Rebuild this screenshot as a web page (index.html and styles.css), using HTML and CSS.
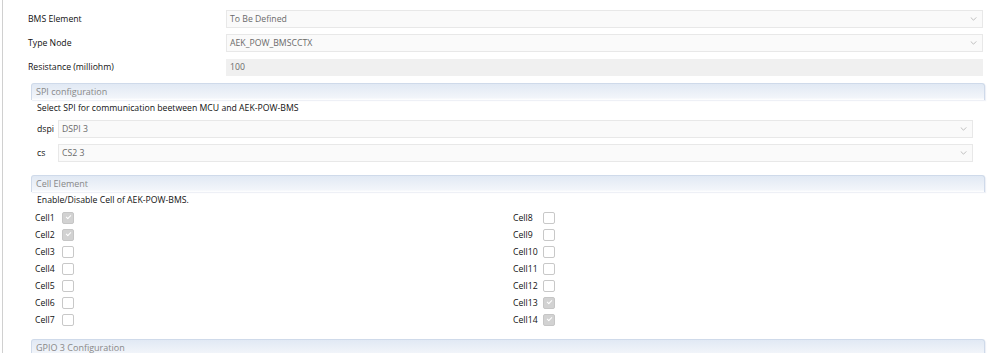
FILE: index.html
```html
<!DOCTYPE html>
<html>
<head>
<meta charset="utf-8">
<link rel="stylesheet" href="styles.css">
</head>
<body>
<div class="page">
  <div class="form">
    <div class="row">
      <span class="label">BMS Element</span>
      <div class="combo"><span>To Be Defined</span><svg class="chev" viewBox="0 0 8 5"><path d="M0.5 0.5 L4 4 L7.5 0.5" /></svg></div>
    </div>
    <div class="row">
      <span class="label">Type Node</span>
      <div class="combo"><span>AEK_POW_BMSCCTX</span><svg class="chev" viewBox="0 0 8 5"><path d="M0.5 0.5 L4 4 L7.5 0.5" /></svg></div>
    </div>
    <div class="row">
      <span class="label">Resistance (milliohm)</span>
      <div class="field"><span>100</span></div>
    </div>
  </div>

  <div class="section spi">
    <div class="sec-head">SPI configuration</div>
    <div class="sec-body">
      <div class="desc">Select SPI for communication beetween MCU and AEK-POW-BMS</div>
      <div class="spi-rows">
        <div class="spi-row">
          <span class="spi-label">dspi</span>
          <div class="combo"><span>DSPI 3</span><svg class="chev" viewBox="0 0 8 5"><path d="M0.5 0.5 L4 4 L7.5 0.5" /></svg></div>
        </div>
        <div class="spi-row">
          <span class="spi-label">cs</span>
          <div class="combo"><span>CS2 3</span><svg class="chev" viewBox="0 0 8 5"><path d="M0.5 0.5 L4 4 L7.5 0.5" /></svg></div>
        </div>
      </div>
    </div>
  </div>

  <div class="section cell-section">
    <div class="sec-head">Cell Element</div>
    <div class="sec-body">
      <div class="desc">Enable/Disable Cell of AEK-POW-BMS.</div>
      <div class="cells">
        <div class="col left">
          <div class="cell"><span>Cell1</span><i class="cb on"></i></div>
          <div class="cell"><span>Cell2</span><i class="cb on"></i></div>
          <div class="cell"><span>Cell3</span><i class="cb"></i></div>
          <div class="cell"><span>Cell4</span><i class="cb"></i></div>
          <div class="cell"><span>Cell5</span><i class="cb"></i></div>
          <div class="cell"><span>Cell6</span><i class="cb"></i></div>
          <div class="cell"><span>Cell7</span><i class="cb"></i></div>
        </div>
        <div class="col right">
          <div class="cell"><span>Cell8</span><i class="cb"></i></div>
          <div class="cell"><span>Cell9</span><i class="cb"></i></div>
          <div class="cell"><span>Cell10</span><i class="cb"></i></div>
          <div class="cell"><span>Cell11</span><i class="cb"></i></div>
          <div class="cell"><span>Cell12</span><i class="cb"></i></div>
          <div class="cell"><span>Cell13</span><i class="cb on"></i></div>
          <div class="cell"><span>Cell14</span><i class="cb on"></i></div>
        </div>
      </div>
    </div>
  </div>

  <div class="section gpio">
    <div class="sec-head">GPIO 3 Configuration</div>
  </div>
</div>
</body>
</html>
```
FILE: styles.css
```css
html, body {
  margin: 0;
  padding: 0;
  background: #ffffff;
}
body {
  font-family: "Open Sans", "Noto Sans", sans-serif;
  font-size: 8.7px;
  color: #111111;
  width: 999px;
  height: 353px;
  overflow: hidden;
}
.page {
  margin-left: 2px;
  border-left: 1px solid #d0d0d0;
  height: 353px;
  box-sizing: border-box;
  padding-top: 10px;
  padding-left: 25px;
}
.form {
  display: flex;
  flex-direction: column;
  gap: 6px;
  width: 955px;
}
.row {
  display: flex;
  align-items: center;
  height: 18px;
}
.label {
  width: 198px;
  flex: none;
}
.combo, .field {
  flex: 1;
  height: 18px;
  box-sizing: border-box;
  border: 1px solid #e8e8e8;
  background: #fafafa;
  color: #6a6a6a;
  display: flex;
  align-items: center;
  padding-left: 3px;
  padding-right: 5px;
  justify-content: space-between;
}
.field {
  background: #f0f0f0;
  border-color: #f0f0f0;
  height: 17px;
}
.chev {
  width: 7px;
  height: 4px;
  fill: none;
  stroke: #b0b0b0;
  stroke-width: 1;
}
.section {
  margin-left: 3px;
  width: 954px;
}
.spi {
  margin-top: 7px;
}
.sec-head {
  height: 17px;
  box-sizing: border-box;
  border: 1px solid #cfdaea;
  border-bottom: none;
  border-radius: 3px 3px 0 0;
  background: linear-gradient(#e1e9f4, #f2f5fa 85%, #ffffff);
  color: #888888;
  font-size: 9px;
  padding-left: 4px;
  line-height: 15px;
  box-shadow: 1px 1px 1px rgba(200, 210, 225, 0.35);
}
.sec-body {
  padding-left: 6px;
}
.desc {
  height: 16px;
  line-height: 16px;
}
.spi-rows {
  display: flex;
  flex-direction: column;
  gap: 6px;
  margin-top: 4px;
  width: 936px;
}
.spi-row {
  display: flex;
  align-items: center;
  height: 18px;
}
.spi-label {
  width: 21px;
  flex: none;
}
.cell-section {
  margin-top: 13px;
}
.cells {
  display: flex;
  margin-top: 1px;
}
.col {
  display: flex;
  flex-direction: column;
}
.col.left {
  width: 476px;
}
.cell {
  display: flex;
  align-items: center;
  height: 17px;
}
.left .cell span {
  width: 27px;
  flex: none;
}
.left .cell {
  margin-left: -2px;
}
.right .cell span {
  width: 30px;
  flex: none;
}
.cb {
  width: 10px;
  height: 10px;
  border: 1px solid #c8c8c8;
  border-radius: 2px;
  background: #fff;
  position: relative;
  display: block;
  flex: none;
}
.cb.on {
  background: #d2d2d2;
  border-color: #c6c6c6;
}
.cb.on::after {
  content: "";
  position: absolute;
  left: 3px;
  top: 2px;
  width: 4px;
  height: 2px;
  border-left: 1px solid #fff;
  border-bottom: 1px solid #fff;
  transform: rotate(-45deg);
}
.gpio {
  margin-top: 11px;
}
```
